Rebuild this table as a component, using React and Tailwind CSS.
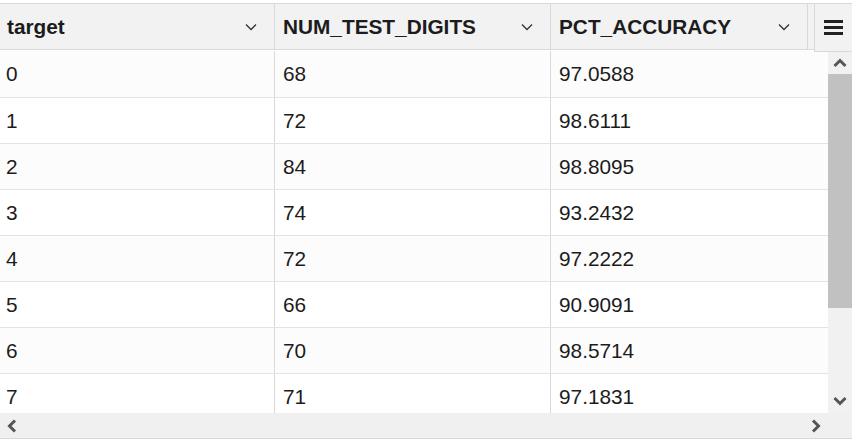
import React from "react";

const rows = [
    ["0", "68", "97.0588"],
    ["1", "72", "98.6111"],
    ["2", "84", "98.8095"],
    ["3", "74", "93.2432"],
    ["4", "72", "97.2222"],
    ["5", "66", "90.9091"],
    ["6", "70", "98.5714"],
    ["7", "71", "97.1831"],
];

const Chevron = () => (
    <svg width="12" height="8" viewBox="0 0 12 8" className="shrink-0">
        <path d="M1 1.5 L6 6.5 L11 1.5" fill="none" stroke="#333" strokeWidth="1.3" />
    </svg>
);

const Arrow = ({ rotate }) => (
    <svg width="14" height="14" viewBox="0 0 14 14" className={rotate}>
        <path d="M1.5 10 L7 4.5 L12.5 10" fill="none" stroke="#555" strokeWidth="3" />
    </svg>
);

const HeaderCell = ({ label, className }) => (
    <div className={`flex items-center justify-between pr-[17px] border-r border-[#d9d9d9] ${className}`}>
        <span className="font-bold">{label}</span>
        <Chevron />
    </div>
);

const App = () => {
    return (
        <div
            className="w-[852px] h-[443px] bg-white pt-[3px] text-[20.8px] text-[#1c1c1c] overflow-hidden"
            style={{ fontFamily: '"Liberation Sans", Arial, sans-serif' }}
        >
            <div className="relative border-t border-[#d9d9d9]">
                <div className="flex h-[46px] bg-[#f2f2f2] border-b border-[#d9d9d9]">
                    <HeaderCell label="target" className="w-[275px] pl-[7px]" />
                    <HeaderCell label="NUM_TEST_DIGITS" className="w-[276px] pl-[8px]" />
                    <HeaderCell label="PCT_ACCURACY" className="w-[257px] pl-[8px]" />
                </div>
                <div className="absolute right-0 top-0 w-[38px] h-[48px] flex items-center justify-center bg-[#f2f2f2] border-l border-b border-[#d9d9d9]">
                    <div className="flex flex-col gap-[3px]">
                        <div className="w-[19px] h-[3px] bg-[#222]"></div>
                        <div className="w-[19px] h-[3px] bg-[#222]"></div>
                        <div className="w-[19px] h-[3px] bg-[#222]"></div>
                    </div>
                </div>
                <div className="flex h-[363px]">
                    <div className="w-[828px] overflow-hidden pt-[1px]">
                        {rows.map((row, i) => (
                            <div
                                key={row[0]}
                                className={`flex h-[46px] border-b border-[#e3e3e3] ${i % 2 === 0 ? "bg-[#fcfcfc]" : "bg-white"} ${i === 0 ? "h-[47px]" : ""}`}
                            >
                                <div className="w-[275px] pl-[6px] flex items-center border-r border-[#d9d9d9]">{row[0]}</div>
                                <div className="w-[276px] pl-[8px] flex items-center border-r border-[#d9d9d9]">{row[1]}</div>
                                <div className="flex-1 pl-[8px] flex items-center">{row[2]}</div>
                            </div>
                        ))}
                    </div>
                    <div className="w-[24px] mt-[2px] flex flex-col bg-[#f1f1f1]">
                        <div className="h-[22px] flex items-center justify-center">
                            <Arrow rotate="" />
                        </div>
                        <div className="h-[234px] bg-[#c1c1c1]"></div>
                        <div className="flex-1"></div>
                        <div className="h-[24px] flex items-center justify-center">
                            <Arrow rotate="rotate-180" />
                        </div>
                    </div>
                </div>
                <div className="flex items-center justify-between h-[26px] bg-[#f0f0f0] border-b border-[#d9d9d9] pl-[5px] pr-[29px]">
                    <Arrow rotate="-rotate-90" />
                    <Arrow rotate="rotate-90" />
                </div>
            </div>
        </div>
    );
};

export default App;
